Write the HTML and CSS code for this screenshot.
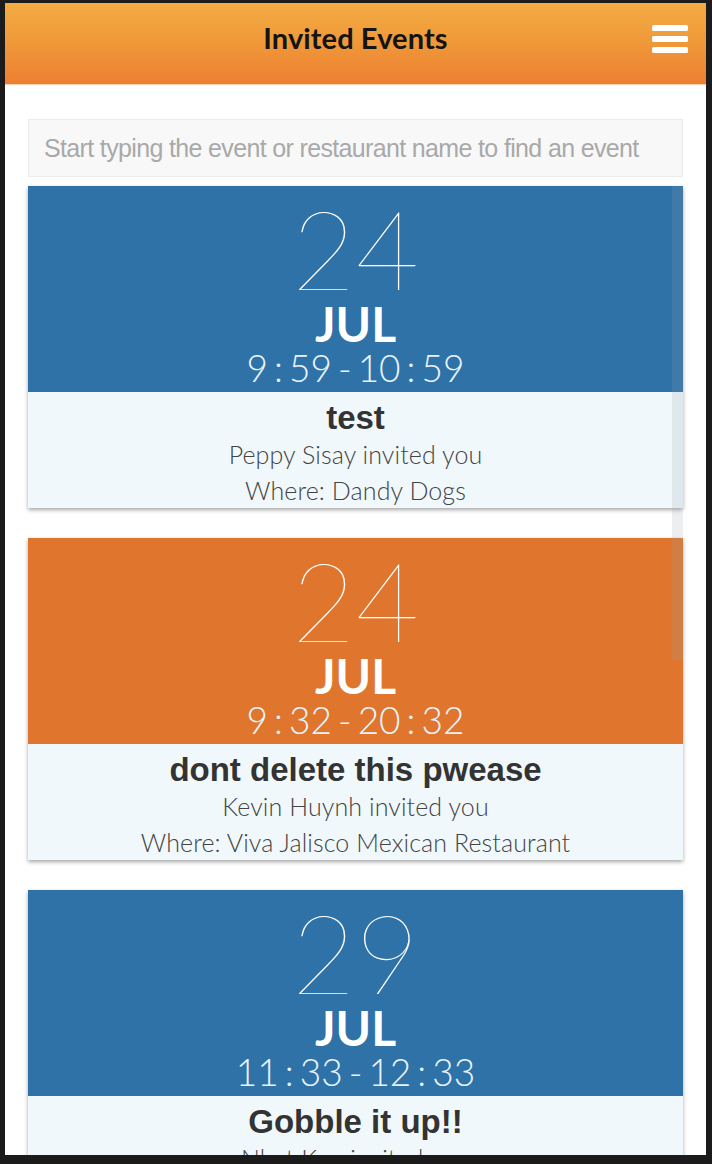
FILE: index.html
```html
<!DOCTYPE html>
<html>
<head>
<meta charset="utf-8">
<link rel="stylesheet" href="styles.css">
</head>
<body>
<div class="screen">
  <header class="topbar">
    <h1 class="title">Invited Events</h1>
    <button class="menu" aria-label="menu">
      <svg width="36" height="30" viewBox="0 0 36 30"><rect x="0" y="1" width="36" height="6" rx="1.5" fill="#fff"/><rect x="0" y="12" width="36" height="6" rx="1.5" fill="#fff"/><rect x="0" y="23" width="36" height="6" rx="1.5" fill="#fff"/></svg>
    </button>
  </header>
  <main class="content">
    <div class="search">Start typing the event or restaurant name to find an event</div>
    <div class="list">
      <article class="card">
        <div class="date blue">
          <div class="day">24</div>
          <div class="month">JUL</div>
          <div class="time">9 : 59 - 10 : 59</div>
        </div>
        <div class="info">
          <div class="name">test</div>
          <div class="line">Peppy Sisay invited you</div>
          <div class="line">Where: Dandy Dogs</div>
        </div>
      </article>
      <article class="card">
        <div class="date orange">
          <div class="day">24</div>
          <div class="month">JUL</div>
          <div class="time">9 : 32 - 20 : 32</div>
        </div>
        <div class="info">
          <div class="name">dont delete this pwease</div>
          <div class="line">Kevin Huynh invited you</div>
          <div class="line">Where: Viva Jalisco Mexican Restaurant</div>
        </div>
      </article>
      <article class="card">
        <div class="date blue">
          <div class="day">29</div>
          <div class="month">JUL</div>
          <div class="time">11 : 33 - 12 : 33</div>
        </div>
        <div class="info">
          <div class="name">Gobble it up!!</div>
          <div class="line">Nhat Kao invited you</div>
          <div class="line">Where: Sunny Grill</div>
        </div>
      </article>
    </div>
    <div class="scrollthumb"></div>
  </main>
</div>
</body>
</html>
```
FILE: styles.css
```css
html, body {
  margin: 0;
  padding: 0;
}
body {
  background: #1b1b1b;
  width: 712px;
  height: 1164px;
  overflow: hidden;
}
.screen {
  margin: 3px 0 0 5px;
  width: 701px;
  height: 1152px;
  background: #fff;
  overflow: hidden;
  display: flex;
  flex-direction: column;
}
.topbar {
  height: 82px;
  flex: none;
  background: linear-gradient(to bottom, #f3ab42 0%, #f09a3a 45%, #ed7f31 100%);
  border-bottom: 1px solid #f6d2b2;
  box-sizing: border-box;
  display: flex;
  align-items: center;
  justify-content: center;
  position: relative;
}
.title {
  margin: 0 0 12px 0;
  font-family: Lato, "Liberation Sans", sans-serif;
  font-weight: 700;
  font-size: 29px;
  color: #141414;
  letter-spacing: 0.1px;
}
.menu {
  position: absolute;
  right: 18px;
  top: 21px;
  border: 0;
  background: none;
  padding: 0;
  width: 36px;
  height: 30px;
  display: block;
}
.menu svg { display: block; }
.content {
  position: relative;
  padding: 34px 23px 0 23px;
  flex: 1;
}
.search {
  height: 58px;
  box-sizing: border-box;
  background: #f8f8f8;
  border: 1px solid #ececec;
  font-family: "Liberation Sans", Arial, sans-serif;
  font-size: 25px;
  color: #a9a9a9;
  padding: 0 0 0 15px;
  display: flex;
  align-items: center;
  letter-spacing: -0.65px;
  white-space: nowrap;
  overflow: hidden;
}
.list {
  margin-top: 9px;
  display: flex;
  flex-direction: column;
  gap: 30px;
}
.card {
  box-shadow: 0 2px 4px rgba(0, 0, 0, 0.35);
}
.date {
  height: 206px;
  box-sizing: border-box;
  padding-top: 6px;
  text-align: center;
  color: #fff;
  font-family: Lato, sans-serif;
}
.blue { background: #2e72a8; }
.orange { background: #e0762d; }
.day {
  font-size: 110px;
  line-height: 110px;
  font-weight: 100;
}
.month {
  font-size: 48px;
  line-height: 48px;
  font-weight: 700;
  margin-top: -2px;
}
.time {
  font-size: 37px;
  line-height: 37px;
  font-weight: 300;
  margin-top: 1px;
  color: #eaf4ff;
  word-spacing: -4px;
}
.info {
  background: #f0f8fb;
  padding: 8px 0 0 0;
  text-align: center;
}
.name {
  font-family: "Liberation Sans", Arial, sans-serif;
  font-weight: 700;
  font-size: 33px;
  line-height: 36px;
  color: #333;
}
.line {
  font-family: Lato, sans-serif;
  font-weight: 300;
  font-size: 25px;
  line-height: 36px;
  color: #444;
  letter-spacing: 0.1px;
}
.scrollthumb {
  position: absolute;
  right: 23px;
  top: 101px;
  width: 11px;
  height: 474px;
  background: rgba(150, 160, 170, 0.18);
}
```
